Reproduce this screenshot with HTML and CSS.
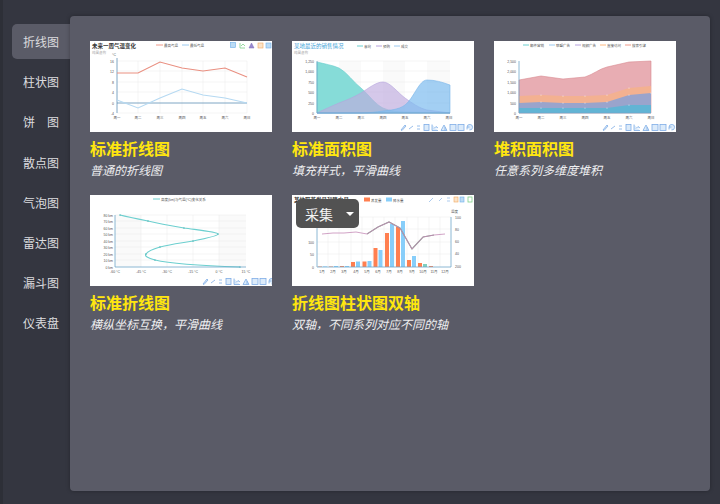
FILE: index.html
```html
<!DOCTYPE html>
<html lang="zh-CN">
<head>
    <meta charset="UTF-8">
    <meta name="viewport" content="width=device-width, initial-scale=1.0">
    <title>图表模板</title>
    <link rel="stylesheet" href="styles.css">
</head>
<body>
    <svg class="defs" width="0" height="0">
        <defs>
            <g id="tools">
                <path d="M1 7 L5 2 L6 3 L2 7.500 Z" />
                <path d="M9 6 L13 3" />
                <path d="M17 3 H20 M17 6 H20" />
                <rect x="24" y="1.500" width="5" height="6" />
                <path d="M32 1.500 V7.500 H38 M34 5.500 L36 3.500 L38 5" />
                <path d="M41 7.500 L44 2 L47 7.500 Z M45 7.500 V4" />
                <rect x="50" y="1.500" width="6" height="6" />
                <rect x="58" y="1.500" width="6" height="6" />
                <path d="M67 4 A2.800 2.800 0 1 1 69.500 7 M67 6.500 V4 H69.500" />
            </g>
        </defs>
    </svg>

    <div class="layout">
        <nav class="side-nav">
            <div class="nav-item active">折线图</div>
            <div class="nav-item">柱状图</div>
            <div class="nav-item">饼　图</div>
            <div class="nav-item">散点图</div>
            <div class="nav-item">气泡图</div>
            <div class="nav-item">雷达图</div>
            <div class="nav-item">漏斗图</div>
            <div class="nav-item">仪表盘</div>
        </nav>

        <main class="panel">
            <div class="card-grid">
                <!-- 标准折线图 -->
                <div class="card">
                    <svg class="thumb" viewBox="0 0 182 91">
                        <text class="t-title" x="2" y="6.500">未来一周气温变化</text>
                        <text class="t-sub" x="2" y="13">纯属虚构</text>
                        <path class="leg-red" d="M66 4 H73" />
                        <text class="t-tiny" x="74" y="5.500">最高气温</text>
                        <path class="leg-blue" d="M92 4 H99" />
                        <text class="t-tiny" x="100" y="5.500">最低气温</text>
                        <rect class="ic-blue" x="140.500" y="1.500" width="5" height="5" />
                        <path class="ic-green" d="M150 2 V7 H155 M151 5 L153 3 L155 5" />
                        <path class="ic-purple" d="M159 7 L161.500 2 L164 7 Z" />
                        <rect class="ic-orange" x="168" y="2" width="5" height="5" />
                        <rect class="ic-blue" x="176" y="2" width="5" height="5" />
                        <path class="grid" d="M27 20 H157 M27 30 H157 M27 41 H157 M27 51 H157 M27 72 H157 M48 20 V72 M70 20 V72 M92 20 V72 M113 20 V72 M135 20 V72 M157 20 V72" />
                        <path class="axis-dark" d="M27 17 V72 M27 62 H157" />
                        <text class="t-label" x="22" y="15">°C</text>
                        <g class="y-labels">
                            <text x="24" y="21.500">16</text>
                            <text x="24" y="31.500">12</text>
                            <text x="24" y="42.500">8</text>
                            <text x="24" y="52.500">4</text>
                            <text x="24" y="63.500">0</text>
                            <text x="24" y="73.500">-4</text>
                        </g>
                        <g class="x-labels">
                            <text x="27" y="78">周一</text>
                            <text x="48" y="78">周二</text>
                            <text x="70" y="78">周三</text>
                            <text x="92" y="78">周四</text>
                            <text x="113" y="78">周五</text>
                            <text x="135" y="78">周六</text>
                            <text x="157" y="78">周日</text>
                        </g>
                        <path class="line-red" d="M27 32 L48 32 L70 21 L92 27 L113 30 L135 27 L157 36" />
                        <path class="line-blue" d="M27 59 L48 67 L70 57 L92 48 L113 54 L135 57 L157 62" />
                    </svg>
                    <h3>标准折线图</h3>
                    <p>普通的折线图</p>
                </div>

                <!-- 标准面积图 -->
                <div class="card">
                    <svg class="thumb" viewBox="0 0 182 91">
                        <text class="t-blue" x="2" y="7">某地最近的销售情况</text>
                        <text class="t-sub" x="2" y="13">纯属虚构</text>
                        <path class="leg-teal" d="M65 5 H71" />
                        <text class="t-tiny" x="72" y="6.500">意向</text>
                        <path class="leg-purple" d="M84 5 H90" />
                        <text class="t-tiny" x="91" y="6.500">预购</text>
                        <path class="leg-blue" d="M102 5 H108" />
                        <text class="t-tiny" x="109" y="6.500">成交</text>
                        <path class="band" d="M47 20 H69 V72 H47 Z M91 20 H113 V72 H91 Z M135 20 H158 V72 H135 Z" />
                        <path class="grid" d="M25 20 H158 M25 30 H158 M25 41 H158 M25 51 H158 M25 62 H158" />
                        <g class="y-labels">
                            <text x="22" y="21.500">1,250</text>
                            <text x="22" y="31.500">1,000</text>
                            <text x="22" y="42.500">750</text>
                            <text x="22" y="52.500">500</text>
                            <text x="22" y="63.500">250</text>
                            <text x="22" y="73.500">0</text>
                        </g>
                        <path class="area-teal" d="M25 21 C33 23 40 24 47 27 C56 32 61 41 69 47 C77 54 83 63 91 67 C98 70 105 71 113 71 L158 72 L25 72 Z" />
                        <path class="area-purple" d="M25 72 C33 68 40 65 47 62 C55 59 62 56 69 52 C77 47 84 41 91 41 C98 41 105 51 113 57 C120 62 127 67 135 69 L158 72 L25 72 Z" />
                        <path class="area-blue" d="M25 72 L69 72 C77 72 84 71 91 70 C98 69 106 69 113 64 C122 57 127 39 135 39 C143 39 150 41 158 44 L158 72 Z" />
                        <path class="axis" d="M25 20 V72 H158" />
                        <g class="x-labels">
                            <text x="25" y="78">周一</text>
                            <text x="47" y="78">周二</text>
                            <text x="69" y="78">周三</text>
                            <text x="91" y="78">周四</text>
                            <text x="113" y="78">周五</text>
                            <text x="135" y="78">周六</text>
                            <text x="157" y="78">周日</text>
                        </g>
                        <use class="tools" href="#tools" x="108" y="82" />
                    </svg>
                    <h3>标准面积图</h3>
                    <p>填充样式，平滑曲线</p>
                </div>

                <!-- 堆积面积图 -->
                <div class="card">
                    <svg class="thumb" viewBox="0 0 182 91">
                        <path class="leg-teal" d="M29 4 H35" />
                        <text class="t-tiny" x="36" y="5.500">邮件营销</text>
                        <path class="leg-blue" d="M55 4 H61" />
                        <text class="t-tiny" x="62" y="5.500">联盟广告</text>
                        <path class="leg-purple" d="M81 4 H87" />
                        <text class="t-tiny" x="88" y="5.500">视频广告</text>
                        <path class="leg-orange" d="M106 4 H112" />
                        <text class="t-tiny" x="113" y="5.500">直接访问</text>
                        <path class="leg-red" d="M131 4 H137" />
                        <text class="t-tiny" x="138" y="5.500">搜索引擎</text>
                        <g class="y-labels">
                            <text x="22" y="21.500">2,500</text>
                            <text x="22" y="31.500">2,000</text>
                            <text x="22" y="42.500">1,500</text>
                            <text x="22" y="52.500">1,000</text>
                            <text x="22" y="63.500">500</text>
                            <text x="22" y="73.500">0</text>
                        </g>
                        <path class="stack-pink" d="M25 39 L47 35 L69 38 L91 36 C100 33 105 28 113 26 L135 21 L157 20 V72 H25 Z" />
                        <path class="stack-orange" d="M25 55 L47 54 L69 55 L91 55 L113 54 L135 47 L157 45 V72 H25 Z" />
                        <path class="stack-purple" d="M25 62 L47 61 L69 62 L91 62 L113 61 L135 54 L157 52 V72 H25 Z" />
                        <path class="stack-blue" d="M25 67 L113 67 L135 64 L157 64 V72 H25 Z" />
                        <path class="dots-white" d="M47 61 V61.100 M69 62 V62.100 M91 62 V62.100 M113 61 V61.100 M135 54 V54.100 M157 52 V52.100 M47 67 V67.100 M69 67 V67.100 M91 67 V67.100 M113 67 V67.100 M135 64 V64.100 M47 54 V54.100 M69 55 V55.100 M91 55 V55.100 M113 54 V54.100 M135 47 V47.100" />
                        <path class="axis" d="M25 20 V72 H157" />
                        <g class="x-labels">
                            <text x="25" y="78">周一</text>
                            <text x="47" y="78">周二</text>
                            <text x="69" y="78">周三</text>
                            <text x="91" y="78">周四</text>
                            <text x="113" y="78">周五</text>
                            <text x="135" y="78">周六</text>
                            <text x="157" y="78">周日</text>
                        </g>
                        <use class="tools" href="#tools" x="108" y="82" />
                    </svg>
                    <h3>堆积面积图</h3>
                    <p>任意系列多维度堆积</p>
                </div>

                <!-- 横纵互换折线图 -->
                <div class="card">
                    <svg class="thumb" viewBox="0 0 182 91">
                        <path class="leg-teal" d="M63 4 H70" />
                        <text class="t-tiny" x="71" y="5.500">高度(km)与气温(°C)变化关系</text>
                        <path class="band" d="M25 20 H51 V72 H25 Z M129 20 H156 V72 H129 Z" />
                        <path class="grid" d="M25 20 H156 M25 26 H156 M25 33 H156 M25 39 H156 M25 46 H156 M25 52 H156 M25 59 H156 M25 65 H156 M51 20 V72 M77 20 V72 M103 20 V72 M129 20 V72" />
                        <g class="y-labels">
                            <text x="23" y="21.500">80 km</text>
                            <text x="23" y="27.500">70 km</text>
                            <text x="23" y="34.500">60 km</text>
                            <text x="23" y="40.500">50 km</text>
                            <text x="23" y="47.500">40 km</text>
                            <text x="23" y="53.500">30 km</text>
                            <text x="23" y="60.500">20 km</text>
                            <text x="23" y="66.500">10 km</text>
                            <text x="23" y="73.500">0 km</text>
                        </g>
                        <g class="x-labels">
                            <text x="25" y="78">-60 °C</text>
                            <text x="51" y="78">-45 °C</text>
                            <text x="77" y="78">-30 °C</text>
                            <text x="103" y="78">-15 °C</text>
                            <text x="129" y="78">0 °C</text>
                            <text x="156" y="78">15 °C</text>
                        </g>
                        <path class="line-teal" d="M150 72 C120 71 82 69 65 65 C58 63 54 61 56 59 C58 56 63 54 70 52 C82 49 92 48 103 46 C113 44 128 41 128 39 C128 37 108 35 94 33 C82 31 70 29 58 26 C48 24 38 22 30 20" />
                        <path class="dots-teal" d="M150 72 V72.100 M65 65 V65.100 M56 59 V59.100 M70 52 V52.100 M103 46 V46.100 M128 39 V39.100 M94 33 V33.100 M58 26 V26.100 M30 20 V20.100" />
                        <path class="axis" d="M25 20 V72 H156" />
                        <use class="tools" href="#tools" x="112" y="82" />
                    </svg>
                    <h3>标准折线图</h3>
                    <p>横纵坐标互换，平滑曲线</p>
                </div>

                <!-- 折线柱状双轴 -->
                <div class="card">
                    <svg class="thumb" viewBox="0 0 182 91">
                        <text class="t-title" x="2" y="6.500">某地区蒸发量和降水量</text>
                        <rect class="bar-orange" x="72" y="2.500" width="6" height="4" />
                        <text class="t-tiny" x="79" y="6.500">蒸发量</text>
                        <rect class="bar-blue" x="94" y="2.500" width="6" height="4" />
                        <text class="t-tiny" x="101" y="6.500">降水量</text>
                        <path class="ic-line" d="M137 7 L141 3 M147 6 L150 3 M155 3 H158 M155 6 H158" />
                        <rect class="ic-orange" x="162" y="2" width="4" height="5" />
                        <rect class="ic-blue" x="168" y="2" width="4" height="5" />
                        <rect class="ic-green" x="176" y="2" width="4" height="5" />
                        <path class="grid" d="M25 22 H159 M25 34 H159 M25 47 H159 M25 59 H159 M36 22 V72 M47 22 V72 M59 22 V72 M70 22 V72 M81 22 V72 M92 22 V72 M103 22 V72 M115 22 V72 M126 22 V72 M137 22 V72 M148 22 V72" />
                        <text class="t-label" x="159" y="18">温度</text>
                        <g class="y-labels">
                            <text x="22" y="48.500">100</text>
                            <text x="22" y="61">50</text>
                            <text x="22" y="73.500">0</text>
                        </g>
                        <g class="y-labels-right">
                            <text x="163" y="24">100</text>
                            <text x="163" y="36">80</text>
                            <text x="163" y="48">60</text>
                            <text x="163" y="60">40</text>
                            <text x="163" y="73">200</text>
                        </g>
                        <g class="bar-orange">
                            <rect x="26" y="71.500" width="4" height="0.500" />
                            <rect x="37" y="71.500" width="4" height="0.500" />
                            <rect x="48" y="71" width="4" height="1" />
                            <rect x="59" y="67" width="4" height="5" />
                            <rect x="70.500" y="66.500" width="4" height="5.500" />
                            <rect x="81.500" y="53" width="4" height="19" />
                            <rect x="93" y="38" width="4" height="34" />
                            <rect x="104" y="32" width="4" height="40" />
                            <rect x="115" y="65" width="4" height="7" />
                            <rect x="126" y="68" width="4" height="4" />
                            <rect x="137" y="71" width="4" height="1" />
                        </g>
                        <g class="bar-blue">
                            <rect x="31" y="71.500" width="4" height="0.500" />
                            <rect x="42" y="71" width="4" height="1" />
                            <rect x="53" y="71" width="4" height="1" />
                            <rect x="64" y="66.500" width="4" height="5.500" />
                            <rect x="75.500" y="66" width="4" height="6" />
                            <rect x="86.500" y="55" width="4" height="17" />
                            <rect x="98" y="29" width="4" height="43" />
                            <rect x="109" y="26" width="4" height="46" />
                            <rect x="120" y="61" width="4" height="11" />
                        </g>
                        <rect class="bar-green" x="131" y="69" width="4" height="3" />
                        <path class="line-shadow" d="M75 39 L86 32 L97 27 L108 33 L120 54 L131 42 L142 40" />
                        <path class="line-mauve" d="M30 39 L41 38 L52 38 L64 37 L75 39 L86 32 L97 27 L108 33 L120 54 L131 42 L142 40 L153 39" />
                        <path class="axis" d="M25 22 V72 H159 M159 22 V72" />
                        <g class="x-labels">
                            <text x="30" y="78">1月</text>
                            <text x="41" y="78">2月</text>
                            <text x="52" y="78">3月</text>
                            <text x="64" y="78">4月</text>
                            <text x="75" y="78">5月</text>
                            <text x="86" y="78">6月</text>
                            <text x="97" y="78">7月</text>
                            <text x="108" y="78">8月</text>
                            <text x="120" y="78">9月</text>
                            <text x="131" y="78">10月</text>
                            <text x="142" y="78">11月</text>
                            <text x="153" y="78">12月</text>
                        </g>
                    </svg>
                    <h3>折线图柱状图双轴</h3>
                    <p>双轴，不同系列对应不同的轴</p>
                    <!-- 悬浮采集按钮 -->
                    <div class="collect-btn">
                        <span>采集</span>
                        <i class="caret"></i>
                    </div>
                </div>
            </div>
        </main>
    </div>
</body>
</html>
```

FILE: styles.css
```css
/* 基础重置 */
* {
    margin: 0;
    padding: 0;
    box-sizing: border-box;
}

html, body {
    height: 100%;
}

body {
    background: #343640;
    border-left: 3px solid #2d2f37;
    font-family: "Liberation Sans", "Noto Sans CJK SC", sans-serif;
    overflow: hidden;
}

.defs {
    position: absolute;
}

/* 整体布局 */
.layout {
    display: flex;
    align-items: flex-start;
    padding: 16px 10px 0 9px;
}

.side-nav {
    width: 58px;
    flex-shrink: 0;
    padding-top: 8px;
}

.nav-item {
    height: 35.200px;
    line-height: 38px;
    margin-bottom: 5px;
    text-align: center;
    font-size: 12px;
    color: #dcdcdf;
    border-radius: 5px 0 0 5px;
}

.nav-item.active {
    background: #5a5b67;
}

/* 主内容区 */
.panel {
    flex: 1;
    height: 475px;
    padding: 25px 20px;
    background: #5a5b67;
    border-radius: 4px;
    box-shadow: 0 0 4px rgba(0, 0, 0, 0.3);
}

.card-grid {
    display: grid;
    grid-template-columns: repeat(3, 182px);
    grid-auto-rows: 154px;
    column-gap: 20px;
}

.card {
    position: relative;
}

.thumb {
    display: block;
    width: 182px;
    height: 91px;
    background: #fff;
}

.card h3 {
    margin-top: 8px;
    font-size: 16px;
    line-height: 20px;
    font-weight: bold;
    color: #ffe60f;
}

.card p {
    margin-top: 2px;
    font-size: 12px;
    line-height: 18px;
    font-style: italic;
    color: #eeeef0;
}

/* 采集按钮 */
.collect-btn {
    position: absolute;
    left: 4px;
    top: 4px;
    width: 63px;
    height: 29px;
    padding-left: 9px;
    display: flex;
    align-items: center;
    gap: 13px;
    background: #525252;
    border-radius: 5px;
    color: #f4f4f4;
    font-size: 14px;
}

.caret {
    width: 0;
    height: 0;
    border-left: 4px solid transparent;
    border-right: 4px solid transparent;
    border-top: 4px solid #fff;
}

/* 图表文字 */
.t-title {
    font-size: 5.500px;
    font-weight: bold;
    fill: #333;
}

.t-blue {
    font-size: 5.500px;
    fill: #3fa2d8;
}

.t-sub {
    font-size: 3.500px;
    fill: #aaa;
}

.t-tiny {
    font-size: 3.500px;
    fill: #555;
}

.t-label {
    font-size: 3.500px;
    fill: #555;
}

.y-labels text {
    font-size: 3.500px;
    fill: #555;
    text-anchor: end;
}

.y-labels-right text {
    font-size: 3.500px;
    fill: #555;
}

.x-labels text {
    font-size: 3.500px;
    fill: #555;
    text-anchor: middle;
}

/* 图表线条 */
.grid {
    fill: none;
    stroke: #e8e8ea;
    stroke-width: 0.500;
}

.axis {
    fill: none;
    stroke: #6fa6c9;
    stroke-width: 0.800;
}

.axis-dark {
    fill: none;
    stroke: #5d8fb5;
    stroke-width: 0.800;
}

.band {
    fill: #fafafa;
}

.line-red {
    fill: none;
    stroke: #e98f80;
    stroke-width: 1.100;
}

.line-blue {
    fill: none;
    stroke: #b5d9f2;
    stroke-width: 1.100;
}

.line-teal {
    fill: none;
    stroke: #6ccfcf;
    stroke-width: 1.100;
}

.line-mauve {
    fill: none;
    stroke: #c58bb8;
    stroke-width: 0.800;
}

.line-shadow {
    fill: none;
    stroke: #8a9a90;
    stroke-width: 1.200;
}

.dots-teal {
    fill: none;
    stroke: #5cbcbc;
    stroke-width: 1.600;
    stroke-linecap: round;
}

.dots-white {
    fill: none;
    stroke: #fff;
    stroke-opacity: 0.7;
    stroke-width: 1.100;
    stroke-linecap: round;
}

.leg-red, .leg-blue, .leg-teal, .leg-purple, .leg-orange {
    fill: none;
    stroke-width: 1;
}

.leg-red { stroke: #f09a8a; }
.leg-blue { stroke: #9ccaf0; }
.leg-teal { stroke: #6ccfcf; }
.leg-purple { stroke: #b6a2de; }
.leg-orange { stroke: #ffb980; }

/* 面积 */
.area-teal { fill: #86dcd8; stroke: #6ccfcf; stroke-width: 0.600; }
.area-purple { fill: rgba(190, 170, 222, 0.65); stroke: #b6a2de; stroke-width: 0.600; }
.area-blue { fill: rgba(125, 188, 240, 0.7); stroke: #7ab5ea; stroke-width: 0.600; }

.stack-pink { fill: #e8adb3; stroke: #d88a90; stroke-width: 0.600; }
.stack-orange { fill: #f3b191; }
.stack-purple { fill: #9aa4cc; }
.stack-blue { fill: #62b4d4; }

/* 柱子 */
.bar-orange { fill: #ff7f50; }
.bar-blue { fill: #87cefa; }
.bar-green { fill: #7fd0c0; }

/* 工具箱图标 */
.tools {
    fill: #dcebfa;
    stroke: #7fade6;
    stroke-width: 0.800;
}

.ic-line {
    fill: none;
    stroke: #8ab4e6;
    stroke-width: 0.700;
}

.ic-blue { fill: #bcdcf5; stroke: #6fb0ea; stroke-width: 0.600; }
.ic-green { fill: none; stroke: #7fd08a; stroke-width: 0.800; }
.ic-purple { fill: #9a8ad0; stroke: #7a68b8; stroke-width: 0.500; }
.ic-orange { fill: #fbe3c8; stroke: #f2a860; stroke-width: 0.600; }
```
